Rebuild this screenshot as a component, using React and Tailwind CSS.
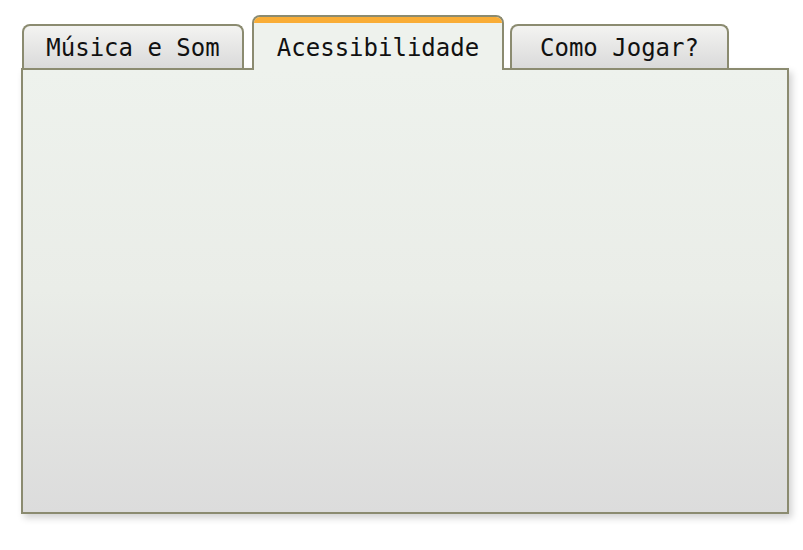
import React from 'react';

const font = { fontFamily: '"DejaVu Sans Mono", monospace' };

function Tab({ label, width }) {
  return (
    <div className={`${width} h-[44px] border-2 border-b-0 border-[#8b8b70] rounded-t-[8px] bg-linear-to-b from-[#f3f3f1] to-[#dadada] flex items-center justify-center text-[24px] text-[#111]`}>
      <span className="mt-[2px]">{label}</span>
    </div>
  );
}

export default function App() {
  return (
    <div className="min-h-[550px] bg-white pt-[15px] pl-[21px]" style={font}>
      <div className="w-[768px]">
        {/* Tabs */}
        <div className="flex items-end pl-px">
          <Tab label="Música e Som" width="w-[222px]" />
          <div className="relative z-10 ml-[8px] -mb-[2px] w-[252px] h-[55px] border-2 border-b-0 border-[#8b8b70] rounded-t-[8px] bg-[#eef2ed] flex flex-col overflow-hidden">
            <div className="h-[6px] bg-[#f9ad36]" />
            <div className="flex-1 flex items-center justify-center text-[24px] text-[#111]">
              <span className="mt-[3px]">Acessibilidade</span>
            </div>
          </div>
          <div className="ml-[6px]">
            <Tab label="Como Jogar?" width="w-[219px]" />
          </div>
        </div>

        {/* Panel */}
        <div className="h-[446px] border-2 border-[#8b8b70] bg-linear-to-b from-[#eef2ed] via-[#eaede8] to-[#dcdcdc] shadow-[3px_4px_7px_rgba(0,0,0,0.18)]" />
      </div>
    </div>
  );
}
